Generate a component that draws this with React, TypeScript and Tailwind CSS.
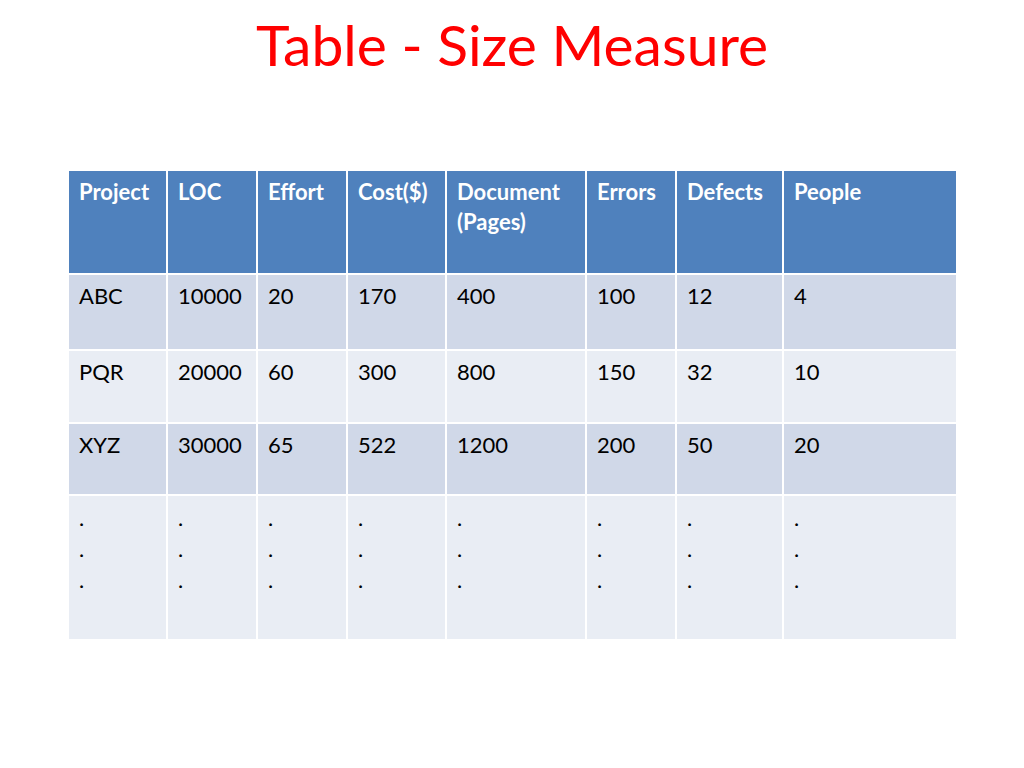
const headers = ["Project", "LOC", "Effort", "Cost($)", "Document (Pages)", "Errors", "Defects", "People"];

const rows = [
  ["ABC", "10000", "20", "170", "400", "100", "12", "4"],
  ["PQR", "20000", "60", "300", "800", "150", "32", "10"],
  ["XYZ", "30000", "65", "522", "1200", "200", "50", "20"],
];

const rowHeights = ["h-[74px]", "h-[71px]", "h-[70px]"];

export default function App() {
  return (
    <div className="w-[1024px] h-[768px] bg-white font-['Lato',sans-serif] relative">
      <h1 className="pt-[11px] text-center text-[57px] leading-[66px] text-[#ff0000]">
        Table - Size Measure
      </h1>

      <div className="mt-[94px] ml-[69px] w-[887px] grid grid-cols-[97px_88px_88px_97px_138px_88px_105px_172px] gap-[2px] bg-white text-[22px] leading-[30px]">
        {headers.map((h) => (
          <div
            key={h}
            className="h-[102px] bg-[#4f81bd] text-white font-bold px-[10px] pt-[6px] whitespace-pre-line"
          >
            {h === "Document (Pages)" ? "Document\n(Pages)" : h}
          </div>
        ))}

        {rows.map((r, i) =>
          r.map((c, j) => (
            <div
              key={`${i}-${j}`}
              className={`${rowHeights[i]} ${i % 2 === 0 ? "bg-[#d0d8e8]" : "bg-[#e9edf4]"} text-black px-[10px] pt-[6px]`}
            >
              {c}
            </div>
          ))
        )}

        {headers.map((h) => (
          <div key={`dots-${h}`} className="h-[143px] bg-[#e9edf4] text-black px-[10px] pt-[6px] leading-[31px]">
            <div>.</div>
            <div>.</div>
            <div>.</div>
          </div>
        ))}
      </div>
    </div>
  );
}
